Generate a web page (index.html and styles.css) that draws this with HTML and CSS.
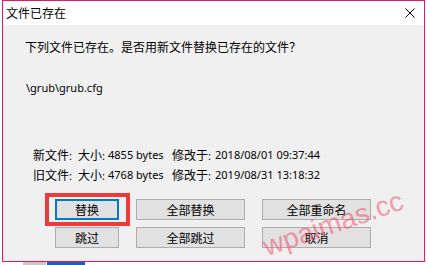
FILE: index.html
```html
<!DOCTYPE html>
<html lang="zh-CN">
<head>
<meta charset="utf-8">
<title>文件已存在</title>
<link rel="stylesheet" href="styles.css">
</head>
<body>
<div class="win">
  <div class="titlebar">
    <span class="title">文件已存在</span>
    <svg class="close" width="10" height="10" viewBox="0 0 10 10"><path d="M0.5 0.5L9.5 9.5M9.5 0.5L0.5 9.5" stroke="#000" stroke-width="1" fill="none"/></svg>
  </div>
  <div class="content">
    <p class="msg">下列文件已存在。是否用新文件替换已存在的文件？</p>
    <p class="path lat">\grub\grub.cfg</p>
    <div class="info">
      <span>新文件<span class="lat">:</span></span><span>大小<span class="lat">:</span></span><span class="lat">4855 bytes</span><span>修改于<span class="lat">:</span></span><span class="lat">2018/08/01 09:37:44</span>
      <span>旧文件<span class="lat">:</span></span><span>大小<span class="lat">:</span></span><span class="lat">4768 bytes</span><span>修改于<span class="lat">:</span></span><span class="lat">2019/08/31 13:18:32</span>
    </div>
    <div class="buttons">
      <div class="cell"><span class="mark"></span><button class="btn focus">替换</button></div>
      <div class="cell"><button class="btn">全部替换</button></div>
      <div class="cell"><button class="btn">全部重命名</button></div>
      <div class="cell"><button class="btn">跳过</button></div>
      <div class="cell"><button class="btn">全部跳过</button></div>
      <div class="cell"><button class="btn">取消</button></div>
    </div>
  </div>
  <div class="wm">wpaimas.cc</div>
</div>
<div class="under"><span class="under-gray"></span><span class="under-blue"></span></div>
</body>
</html>
```
FILE: styles.css
```css
html, body {
  margin: 0;
  padding: 0;
  background: #ffffff;
}
body {
  font-family: "Noto Sans CJK SC", sans-serif;
  font-size: 12px;
  color: #000;
}
.win {
  position: relative;
  margin-left: 2px;
  width: 423px;
  height: 262px;
  box-sizing: border-box;
  border: 1px solid #e8185e;
  background: #f0f0f0;
  display: flex;
  flex-direction: column;
  overflow: hidden;
}
.titlebar {
  height: 24px;
  flex: none;
  background: #ffffff;
  display: flex;
  align-items: center;
  justify-content: space-between;
  padding: 0 9px 0 3px;
}
.title {
  font-size: 12px;
  line-height: 16px;
}
.close {
  display: block;
}
.content {
  padding: 14px 0 0 22px;
  display: flex;
  flex-direction: column;
}
.msg {
  margin: 0;
  line-height: 16px;
  height: 16px;
  white-space: nowrap;
}
.lat {
  font-family: "Noto Sans", "Noto Sans CJK SC", sans-serif;
  font-size: 11px;
}
.path {
  margin: 25px 0 0 1px;
  line-height: 16px;
  height: 16px;
}
.info {
  margin: 49px 0 0 8px;
  display: grid;
  grid-template-columns: 45px 30px 64px 43px auto;
  grid-auto-rows: 20px;
  align-items: center;
  white-space: nowrap;
  line-height: 16px;
}
.buttons {
  margin: 14px 0 0 30px;
  display: grid;
  grid-template-columns: 64px 109px 109px;
  grid-auto-rows: 21px;
  column-gap: 17px;
  row-gap: 7px;
}
.cell {
  position: relative;
  display: flex;
}
.btn {
  flex: 1;
  margin: 0;
  padding: 0;
  box-sizing: border-box;
  border: 1px solid #adadad;
  background: #e1e1e1;
  font-family: "Noto Sans CJK SC", sans-serif;
  font-size: 12px;
  line-height: 16px;
  color: #000;
}
.btn.focus {
  border: 2px solid #0078d7;
}
.mark {
  position: absolute;
  left: -10px;
  top: -6px;
  right: -11px;
  bottom: -6px;
  border: 4px solid #ee3a3a;
}
.wm {
  position: absolute;
  left: 266px;
  top: 231px;
  font-family: "Liberation Sans", sans-serif;
  font-size: 28px;
  line-height: 30px;
  color: rgba(240, 80, 110, 0.55);
  transform: rotate(-19deg);
  transform-origin: 0 100%;
  white-space: nowrap;
}
.under {
  display: flex;
  height: 3px;
  padding-left: 23px;
  gap: 1px;
}
.under-gray {
  width: 23px;
  background: #c9c9c9;
}
.under-blue {
  width: 38px;
  background: #1d5fb0;
}
```
